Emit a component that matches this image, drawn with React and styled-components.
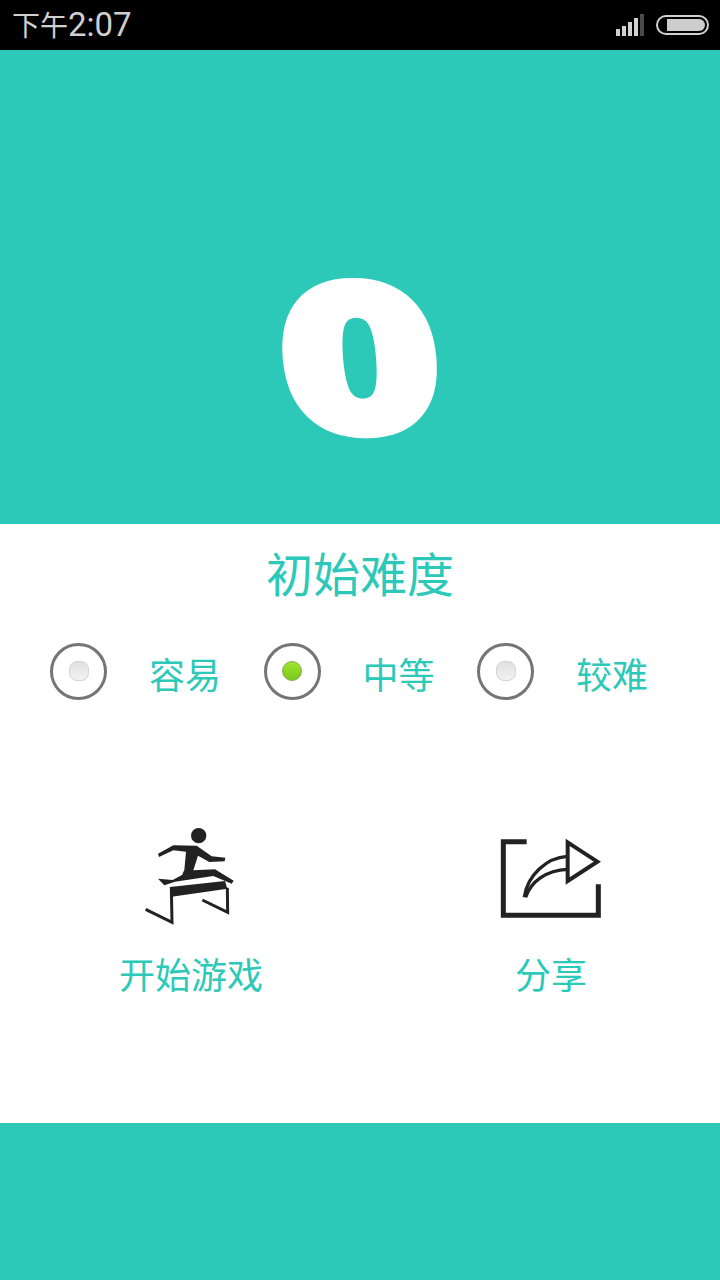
import React, {useState} from "react";
import styled, {createGlobalStyle} from "styled-components";

const teal = "#2cc9b9";

const GlobalStyle = createGlobalStyle`
  html, body {
    margin: 0;
    padding: 0;
    background: #fff;
    font-family: "Noto Sans CJK SC", "Liberation Sans", sans-serif;
  }
`;

const Page = styled.div`
  width: 720px;
  height: 1280px;
  display: flex;
  flex-direction: column;
  overflow: hidden;
`;

const StatusBar = styled.div`
  height: 50px;
  background: #000;
  display: flex;
  align-items: center;
  justify-content: space-between;
  padding: 0 11px 0 12px;
  color: #cfcfcf;
`;

const Clock = styled.div`
  font-size: 33px;
  line-height: 50px;
  padding-top: 2px;
  font-family: "Roboto", "Noto Sans CJK SC", sans-serif;
`;

const ClockPrefix = styled.span`
  font-size: 28px;
`;

const StatusIcons = styled.div`
  display: flex;
  align-items: center;
  gap: 12px;
`;

const Hero = styled.div`
  height: 474px;
  background: ${teal};
  display: flex;
  justify-content: center;
  padding-top: 231px;
  box-sizing: border-box;
`;

const Score = styled.div`
  font-family: "DejaVu Sans", sans-serif;
  font-weight: 700;
  font-size: 192px;
  line-height: 162px;
  height: 162px;
  color: #fff;
  -webkit-text-stroke: 15px #fff;
  transform: scaleX(1.18) skewX(4deg);
`;

const Body = styled.div`
  height: 599px;
  background: #fff;
  display: flex;
  flex-direction: column;
`;

const Title = styled.div`
  margin-top: 14px;
  height: 68px;
  line-height: 68px;
  text-align: center;
  font-size: 47px;
  color: ${teal};
`;

const Levels = styled.div`
  margin-top: 36px;
  padding-left: 50px;
  display: grid;
  grid-template-columns: repeat(3, 213.5px);
`;

const Level = styled.div`
  display: flex;
  align-items: center;
  gap: 42px;
  height: 58px;
  cursor: pointer;
`;

const Radio = styled.div`
  width: 57px;
  height: 57px;
  box-sizing: border-box;
  border-radius: 50%;
  border: 3px solid #757575;
  background: #fff;
  display: flex;
  align-items: center;
  justify-content: center;
`;

const Dot = styled.div`
  width: 20px;
  height: 20px;
  box-sizing: border-box;
  border-radius: ${p => (p.$on ? "50%" : "8px")};
  border: 1px solid ${p => (p.$on ? "#8aa85a" : "#d4d4d4")};
  background: ${p => (p.$on ? "linear-gradient(#9fe52c, #78c81a)" : "linear-gradient(#e0e0e0, #f2f2f2)")};
`;

const LevelLabel = styled.div`
  font-size: 36px;
  line-height: 58px;
  color: ${teal};
  margin-top: 3px;
`;

const Actions = styled.div`
  margin-top: 115px;
  display: grid;
  grid-template-columns: 382px 338px;
`;

const Action = styled.div`
  display: flex;
  flex-direction: column;
  align-items: center;
  cursor: pointer;
`;

const IconSlot = styled.div`
  height: 120px;
  display: flex;
  align-items: flex-end;
`;

const ActionLabel = styled.div`
  margin-top: 10px;
  font-size: 36px;
  line-height: 56px;
  color: ${teal};
`;

const Footer = styled.div`
  flex: 1;
  background: ${teal};
`;

const SignalIcon = () => (
  <svg width="28" height="22" viewBox="0 0 28 22">
    <rect x="0" y="15" width="4" height="7" fill="#d0d0d0" />
    <rect x="6" y="12" width="4" height="10" fill="#d0d0d0" />
    <rect x="12" y="8" width="4" height="14" fill="#d0d0d0" />
    <rect x="18" y="4" width="4" height="18" fill="#d0d0d0" />
    <rect x="24" y="0" width="4" height="22" fill="#4a4a4a" />
  </svg>
);

const BatteryIcon = () => (
  <svg width="53" height="20" viewBox="0 0 53 20">
    <rect x="1" y="1" width="51" height="18" rx="9" fill="none" stroke="#d0d0d0" strokeWidth="2" />
    <path d="M11 4H43a6 6 0 0 1 6 6a6 6 0 0 1 -6 6H11Z" fill="#cdcdcd" />
  </svg>
);

const RunnerIcon = () => (
  <svg width="120" height="120" viewBox="3 0 360 360">
    <g fill="#222">
      <circle cx="206" cy="62" r="23" />
      <path d="M84 116 L130 91 L200 92 L245 124 L286 128 L284 139 L238 141 L204 122 L190 166 L255 163 L311 197 L305 206 L250 183 L135 200 L103 211 L84 191 L128 195 L156 180 L163 165 L168 110 L130 106 L87 126 Z" />
      <path d="M120 216 L285 198 L292 221 L120 246 Z" />
    </g>
    <g fill="none" stroke="#222" strokeWidth="9">
      <path d="M124 216 L126 322 L47 283" />
      <path d="M292 218 L293 292 L217 255" />
    </g>
  </svg>
);

const ShareIcon = () => (
  <svg width="120" height="110" viewBox="3 0 360 330">
    <g fill="none" stroke="#222">
      <path d="M110 50 H40 V271 H325 V178" strokeWidth="15" />
      <path d="M233 52 L322 110 L233 168 Z" strokeWidth="12" />
      <path d="M103 217 C112 150 170 98 232 94" strokeWidth="10" />
      <path d="M107 217 C122 170 170 135 232 133" strokeWidth="10" />
    </g>
  </svg>
);

const levels = ["容易", "中等", "较难"];

const App = () => {
  const [level, setLevel] = useState(1);

  return (
    <Page>
      <GlobalStyle />
      <StatusBar>
        <Clock><ClockPrefix>下午</ClockPrefix>2:07</Clock>
        <StatusIcons>
          <SignalIcon />
          <BatteryIcon />
        </StatusIcons>
      </StatusBar>
      <Hero>
        <Score>0</Score>
      </Hero>
      <Body>
        <Title>初始难度</Title>
        <Levels>
          {levels.map((name, i) => (
            <Level key={name} onClick={() => setLevel(i)}>
              <Radio>
                <Dot $on={level === i} />
              </Radio>
              <LevelLabel>{name}</LevelLabel>
            </Level>
          ))}
        </Levels>
        <Actions>
          <Action>
            <IconSlot><RunnerIcon /></IconSlot>
            <ActionLabel>开始游戏</ActionLabel>
          </Action>
          <Action>
            <IconSlot><ShareIcon /></IconSlot>
            <ActionLabel>分享</ActionLabel>
          </Action>
        </Actions>
      </Body>
      <Footer />
    </Page>
  );
};

export default App;
